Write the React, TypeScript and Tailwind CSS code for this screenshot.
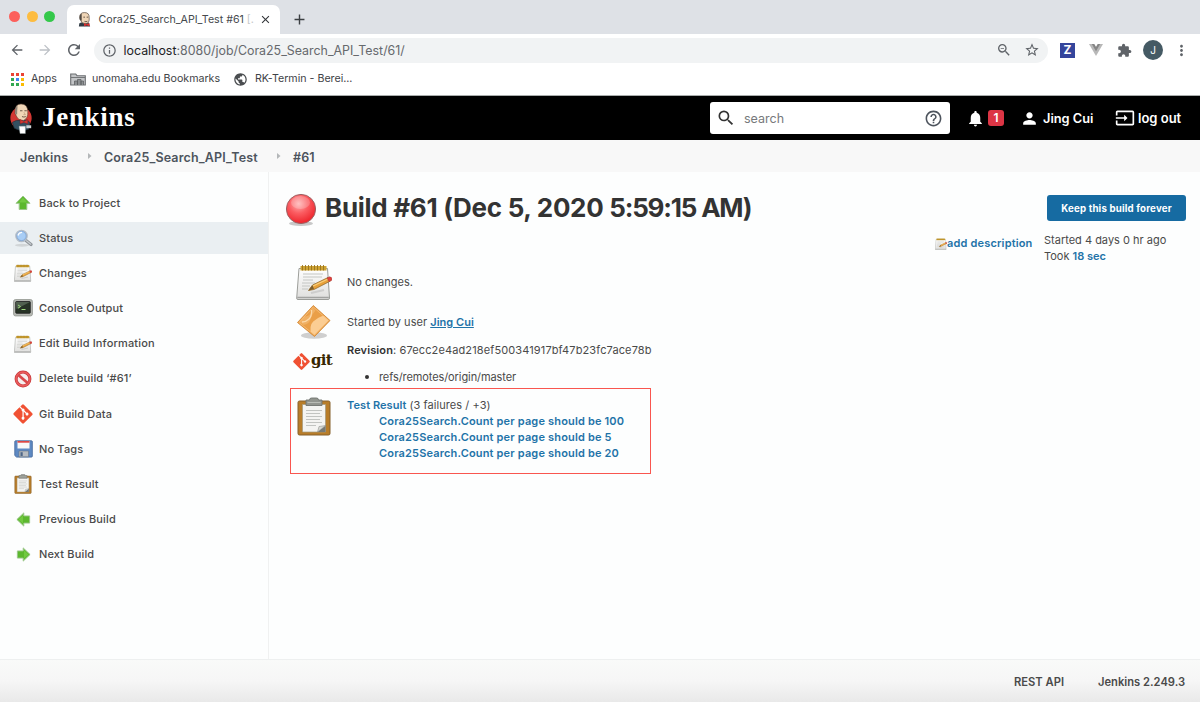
import React from "react";
import {
  MdAdd,
  MdArrowBack,
  MdArrowForward,
  MdClose,
  MdExtension,
  MdHelpOutline,
  MdInfoOutline,
  MdInput,
  MdMoreVert,
  MdNotifications,
  MdPerson,
  MdPublic,
  MdRefresh,
  MdSearch,
  MdStarBorder,
  MdZoomOut,
} from "react-icons/md";
import { FaGitAlt } from "react-icons/fa";

type IconProps = { className?: string };

function Butler({ className }: IconProps) {
  return (
    <svg viewBox="0 0 24 32" className={className}>
      <ellipse cx="12" cy="15.500" rx="11" ry="11.500" fill="#d33833" />
      <path d="M3 20 Q7 17 12 18 Q18 16 21 20 L20 27 Q12 30 5 26 Z" fill="#335061" stroke="#1c2a33" strokeWidth=".6" />
      <path d="M6 8 Q6 1 12 1 Q19 1 19 9 Q19.500 16 14.500 18 Q9 18 7 13 Q5 11 6 8Z" fill="#f0d6b7" stroke="#5a4436" strokeWidth=".6" />
      <path d="M6 11 Q5 5 8.500 3 Q8 8 8 12Z" fill="#8d8377" />
      <path d="M11 8h2.500M15.500 8h2.500M13 14q2 1 4 0" stroke="#49372b" strokeWidth=".8" fill="none" />
      <path d="M15 9.500l1.500 2.500h-2" stroke="#b08968" strokeWidth=".6" fill="none" />
      <path d="M11 17l4 2 4-2v4.500l-4-1.500-4 1.500z" fill="#d33833" stroke="#81171a" strokeWidth=".4" />
      <path d="M10 24h6.500v7.500h-5.500z" fill="#fff" stroke="#9aa" strokeWidth=".4" />
      <path d="M17.500 23h5v3h-5z" fill="#ccd3d6" />
    </svg>
  );
}

function ButlerHead({ className }: IconProps) {
  return (
    <svg viewBox="0 0 16 16" className={className}>
      <path d="M2 15.500l.5-3.500 4-1.500 6 1 1.500 4z" fill="#303b45" />
      <path d="M3 6 Q2.500 .6 8 .6 Q13.200 .6 13 6 Q13.500 12 9.500 12.500 Q5 12.500 3.800 9Z" fill="#efd5b6" stroke="#4c4038" strokeWidth=".7" />
      <path d="M2.800 8 Q2 3 5 1.800 L5 9.500Z" fill="#4f4842" />
      <path d="M6.800 5.500h1.700M10.300 5.500h1.700M8 10q1.500.7 3 0" stroke="#3b2e26" strokeWidth=".8" fill="none" />
      <path d="M7.500 11.800l2.800 1.200 3-1.200v3.400l-3-1-2.800 1z" fill="#d8302f" />
    </svg>
  );
}

function Notepad({ className }: IconProps) {
  return (
    <svg viewBox="0 0 36 36" className={className}>
      <defs>
        <linearGradient id="npPaper" x1="0" y1="0" x2="0" y2="1">
          <stop offset="0" stopColor="#ffffff" />
          <stop offset="1" stopColor="#dededc" />
        </linearGradient>
      </defs>
      <path d="M3 4.500h28.500l2 29.500q0 1.500-1.500 1.500H2q-1.500 0-1.300-1.500z" fill="url(#npPaper)" stroke="#9b9d99" strokeWidth="1" />
      <path d="M1.300 33.500h31.500" stroke="#a2a3a1" strokeWidth="1.500" />
      <path d="M4.500 2h26v4.500h-26z" fill="#cfa433" />
      <path d="M6.500 1v5.500M9.500 1v5.500M12.500 1v5.500M15.500 1v5.500M18.500 1v5.500M21.500 1v5.500M24.500 1v5.500M27.500 1v5.500" stroke="#97731f" strokeWidth=".9" />
      <path d="M7 10h20M7 13h19M7 16h10M6 19h13M6 22h8M6 25h6" stroke="#c4c6c3" strokeWidth="1" />
      <path d="M15 29l13-3" stroke="#aaa" strokeWidth="2" opacity=".4" />
      <path d="M12.500 26.500l4-5.500L32 13.500l2.500 3.500L18 25.500z" fill="#e7a039" stroke="#866127" strokeWidth=".7" />
      <path d="M16 22.500l16-7.500" stroke="#f9d07d" strokeWidth="1.200" />
      <path d="M12.500 26.500l4-5.500 1.500 4z" fill="#7c5f30" />
      <path d="M31 14l2.500-1.200q3 0 2.300 3.500L33 17.600z" fill="#e0403c" stroke="#a83a36" strokeWidth=".5" />
    </svg>
  );
}

function Clipboard({ className }: IconProps) {
  return (
    <svg viewBox="0 0 34 39" className={className}>
      <rect x="1" y="4" width="32" height="34" rx="1.500" fill="#b87d29" stroke="#86602c" strokeWidth="1" />
      <path d="M5.500 7.500h23V35h-23z" fill="#f4f4f2" stroke="#a29880" strokeWidth=".7" />
      <path d="M9 13.500h16M9 16.500h14M9 19.500h16M9 22.500h14M9 25.500h16M9 28.500h10" stroke="#c2c4c1" strokeWidth="1" />
      <path d="M28.500 28.500V35h-8z" fill="#777974" />
      <path d="M20.500 35l1.500-5.500 6.500-1z" fill="#d5d7d3" stroke="#858783" strokeWidth=".5" />
      <path d="M12.500 3q0-2 2-2h5q2 0 2 2H25v5.500H9V3z" fill="#92958f" stroke="#71746f" strokeWidth=".9" />
      <path d="M10.500 5.500h13" stroke="#b9bcb6" strokeWidth="1" />
    </svg>
  );
}

function Diamond({ className }: IconProps) {
  return (
    <svg viewBox="0 0 36 36" className={className}>
      <ellipse cx="18" cy="31.500" rx="13" ry="3.300" fill="#777" opacity=".35" />
      <path d="M17.300 1.500L34 16.500 18.500 32.500 1.500 18.500z" fill="#ea9f48" stroke="#d38a3a" strokeWidth=".9" />
      <path d="M16.500 3.500l-1 5q-2 4-7.500 4L3.500 18l4 3q6-1 7-6 1-4 5-8.500z" fill="#f0b064" />
      <path d="M20 15.500q5-4 8-3.500l4.500 4.500L18.500 31l-4-3.500q-1-9 5.500-12z" fill="#fbcd93" />
      <path d="M15.500 6q.5 6-2.500 9t-7 3" stroke="#fbd8a8" strokeWidth="1.300" fill="none" />
      <path d="M17.300 3L32.500 16.500 18.500 31 3 18.500z" fill="none" stroke="#f9c07b" strokeWidth=".8" />
    </svg>
  );
}

function RedBall({ className }: IconProps) {
  return (
    <svg viewBox="0 0 32 34" className={className}>
      <defs>
        <radialGradient id="ball" cx=".42" cy=".32" r=".65">
          <stop offset="0" stopColor="#ffb3b3" />
          <stop offset=".5" stopColor="#fb5d62" />
          <stop offset="1" stopColor="#ef2930" />
        </radialGradient>
      </defs>
      <ellipse cx="16" cy="30.500" rx="12" ry="2.500" fill="#777" opacity=".4" />
      <circle cx="16" cy="16" r="14.600" fill="url(#ball)" stroke="#9c6264" strokeWidth="1" />
      <ellipse cx="15.500" cy="9.500" rx="9.500" ry="6.500" fill="#fff" opacity=".2" />
    </svg>
  );
}

function GreenArrow({ className }: IconProps) {
  return (
    <svg viewBox="0 0 18 18" className={className}>
      <path d="M9 2L16 9.300H12.800V15.500H5.200V9.300H2z" fill="#5cb82e" stroke="#9cc78b" strokeWidth="1" strokeLinejoin="round" />
      <path d="M9 3.700L13.500 8.500H4.500z" fill="#7cd04a" opacity=".7" />
    </svg>
  );
}

function Lens({ className }: IconProps) {
  return (
    <svg viewBox="0 0 19 19" className={className}>
      <ellipse cx="8" cy="16.300" rx="7" ry="1.500" fill="#999" opacity=".3" />
      <path d="M12 11.500l5 4" stroke="#8f9499" strokeWidth="3.200" strokeLinecap="round" />
      <path d="M12.500 11.800l4.300 3.400" stroke="#c9ced2" strokeWidth="1.200" strokeLinecap="round" />
      <circle cx="7.500" cy="7" r="5.500" fill="#a8cdf5" stroke="#b3bdc8" strokeWidth="1.700" />
      <path d="M3.800 6.500q.7-3.300 4.300-3.200" stroke="#fff" strokeWidth="1.600" fill="none" />
      <circle cx="7.500" cy="7" r="4.600" fill="none" stroke="#6d9bd5" strokeWidth=".6" />
    </svg>
  );
}

function Terminal({ className }: IconProps) {
  return (
    <svg viewBox="0 0 20 18" className={className}>
      <rect x=".6" y=".6" width="18.800" height="16.300" rx="1.800" fill="#b7bab4" stroke="#959993" strokeWidth=".9" />
      <rect x="2.700" y="2.500" width="14.600" height="11.800" rx=".8" fill="#273326" stroke="#222" strokeWidth=".8" />
      <path d="M3 3h14L3.500 10z" fill="#647562" opacity=".7" />
      <path d="M5 6l2.500 1.600L5 9.200M8.500 10.500h4" stroke="#9fdc7c" strokeWidth="1" fill="none" />
    </svg>
  );
}

function NoEntry({ className }: IconProps) {
  return (
    <svg viewBox="0 0 18 18" className={className}>
      <circle cx="9" cy="9" r="6.900" fill="#f6eeee" stroke="#c4393b" strokeWidth="3" />
      <circle cx="9" cy="9" r="6.900" fill="none" stroke="#ea5b5c" strokeWidth="1.700" />
      <path d="M4.300 5l9.400 8" stroke="#d9484a" strokeWidth="2.800" />
    </svg>
  );
}

function Floppy({ className }: IconProps) {
  return (
    <svg viewBox="0 0 19 18" className={className}>
      <path d="M1.500.8h16q.8 0 .8.800v14.600q0 .9-.9.900H2.600L.8 15.500V1.600q0-.8.700-.8z" fill="#5d89c3" stroke="#4b6ea0" strokeWidth=".9" />
      <path d="M3.500 1h12v7.500h-12z" fill="#f8f8f8" />
      <path d="M3.500 1h12v1.700h-12z" fill="#dc4744" />
      <path d="M5 11h9.500v5.800H5z" fill="#b6bbc0" stroke="#697683" strokeWidth=".6" />
      <path d="M6.500 12.200h2.200v3.800H6.500z" fill="#4d6687" />
    </svg>
  );
}

function Folder({ className }: IconProps) {
  return (
    <svg viewBox="0 0 16 13" className={className}>
      <path d="M.7 1h5l1.300 1.700h8.300V12H.7z" fill="#c3c5c7" stroke="#6b6e71" strokeWidth="1.100" />
      <path d="M1 4.500h14" stroke="#6b6e71" strokeWidth=".9" />
      <path d="M4.500 12V8h3v4M7.500 12V6.500h3.500V12M11 12V8h2.500v4" fill="#8c8f91" stroke="#5f6265" strokeWidth=".8" />
    </svg>
  );
}

const appDots = [
  "#ea4335", "#ea4335", "#ea4335",
  "#34a853", "#4285f4", "#fbbc04",
  "#34a853", "#34a853", "#fbbc04",
];

function BrowserChrome() {
  return (
    <header className="shrink-0">
      <div className="flex h-[34px] bg-[#dee1e6]">
        <div className="flex w-[67px] gap-[6.500px] pt-[11px] pl-[9px]">
          <span className="size-[11px] rounded-full bg-[#fc605c]" />
          <span className="size-[11px] rounded-full bg-[#fdbc40]" />
          <span className="size-[11px] rounded-full bg-[#34c84a]" />
        </div>
        <div className="mt-[5px] flex w-[213px] items-center rounded-t-[7px] bg-white pl-[10px]">
          <ButlerHead className="size-[15px]" />
          <span className="ml-[6.500px] w-[157.500px] text-[10.650px] whitespace-nowrap text-[#45494d]">
            Cora25_Search_API_Test #61 <span className="text-[#c5c7c9]">[.</span>
          </span>
          <MdClose className="ml-[3px] size-[13px] shrink-0 text-[#33363a]" />
        </div>
        <MdAdd className="mt-[11px] ml-[11px] size-[17px] text-[#3c4043]" />
      </div>
      <div className="flex h-[32px] items-center bg-white text-[#5f6368]">
        <MdArrowBack className="ml-[9px] size-[16px]" />
        <MdArrowForward className="ml-[12px] size-[16px] text-[#bdc1c6]" />
        <MdRefresh className="ml-[12px] size-[18px]" />
        <div className="ml-[11px] flex h-[25px] w-[954px] items-center rounded-full bg-[#f1f3f4] pl-[8px]">
          <MdInfoOutline className="size-[15px]" />
          <span className="ml-[6.500px] pt-[2px] text-[12.400px] whitespace-nowrap text-[#66696d]">
            <span className="text-[#202124]">localhost</span>:8080/job/Cora25_Search_API_Test/61/
          </span>
          <MdZoomOut className="ml-auto size-[16px]" />
          <MdStarBorder className="mr-[8px] ml-[12px] size-[16px]" />
        </div>
        <span className="ml-[12px] flex size-[15px] items-center justify-center bg-[#35459c] text-[12px] font-bold text-white">Z</span>
        <svg viewBox="0 0 14 12" className="ml-[14px] h-[12px] w-[14px]">
          <path d="M0 0h14L7 12z" fill="#b8b8b8" />
          <path d="M2.800 0h2.600L7 2.800 8.600 0h2.600L7 7.200z" fill="#858585" />
          <path d="M5.400 0h3.200L7 2.800z" fill="#fff" />
        </svg>
        <MdExtension className="ml-[14px] size-[15px]" />
        <span className="ml-[11px] flex size-[20px] items-center justify-center rounded-full bg-[#455a64] text-[10px] text-white">J</span>
        <MdMoreVert className="ml-[10px] size-[17px]" />
      </div>
      <div className="flex h-[30px] items-center border-b border-[#a9adac] bg-white pb-[3px] text-[10.650px] text-[#3f4347]">
        <span className="ml-[11px] grid grid-cols-3 gap-[2px]">
          {appDots.map((color, i) => (
            <span key={i} className="size-[3px]" style={{ backgroundColor: color }} />
          ))}
        </span>
        <span className="ml-[7px] w-[27px]">Apps</span>
        <Folder className="ml-[12px] h-[13px] w-[16px]" />
        <span className="ml-[6px] w-[128px] whitespace-nowrap">unomaha.edu Bookmarks</span>
        <MdPublic className="ml-[13px] size-[15px] text-[#4a4d50]" />
        <span className="ml-[7px] whitespace-nowrap">RK-Termin - Berei...</span>
      </div>
    </header>
  );
}

function JenkinsHeader() {
  return (
    <div className="flex h-[44px] shrink-0 items-center bg-black font-semibold text-white">
      <Butler className="ml-[9px] h-[31px] w-[24px]" />
      <span className="mb-[2px] ml-[9px] font-['Liberation_Serif',serif] text-[27px] leading-none font-bold tracking-[0.026em]">Jenkins</span>
      <div className="ml-auto flex h-[32px] w-[240px] items-center rounded-[3px] bg-white text-[#4d545d]">
        <MdSearch className="ml-[6px] size-[20px] text-[#333]" />
        <span className="ml-[8px] pt-[2px] text-[12.500px] font-normal text-[#77797c]">search</span>
        <MdHelpOutline className="mr-[7px] ml-auto size-[19px]" />
      </div>
      <MdNotifications className="ml-[16px] size-[19px]" />
      <span className="ml-[3px] flex h-[16px] w-[16px] items-center justify-center rounded-[3px] bg-[#dc3545] text-[12px]">1</span>
      <MdPerson className="ml-[16px] size-[19px]" />
      <span className="ml-[4px] w-[51px] pt-[2px] text-[12.800px] whitespace-nowrap">Jing Cui</span>
      <MdInput className="ml-[21px] size-[20px]" />
      <span className="ml-[3px] w-[62px] pt-[2px] text-[13px] whitespace-nowrap">log out</span>
    </div>
  );
}

function Caret() {
  return (
    <svg viewBox="0 0 4 6" className="h-[6px] w-[4px]">
      <path d="M0 0l3.500 3L0 6z" fill="#b4b7b9" />
    </svg>
  );
}

function Breadcrumbs() {
  return (
    <nav className="flex h-[32px] shrink-0 items-center bg-[#f8f8f8] pl-[20px] text-[12.500px] font-semibold tracking-[0.012em] text-[#4d545d]">
      <span className="w-[68px] pt-[4px] whitespace-nowrap">Jenkins</span>
      <Caret />
      <span className="ml-[12px] w-[173px] pt-[4px] whitespace-nowrap">Cora25_Search_API_Test</span>
      <Caret />
      <span className="ml-[12px] pt-[4px]">#61</span>
    </nav>
  );
}

const tasks: { label: string; icon: React.ReactNode; active?: boolean }[] = [
  { label: "Back to Project", icon: <GreenArrow className="size-[18px]" /> },
  { label: "Status", icon: <Lens className="size-[19px]" />, active: true },
  { label: "Changes", icon: <Notepad className="size-[18px]" /> },
  { label: "Console Output", icon: <Terminal className="h-[18px] w-[20px]" /> },
  { label: "Edit Build Information", icon: <Notepad className="size-[18px]" /> },
  { label: "Delete build ‘#61’", icon: <NoEntry className="size-[18px]" /> },
  { label: "Git Build Data", icon: <FaGitAlt className="size-[22px] text-[#f05133]" /> },
  { label: "No Tags", icon: <Floppy className="h-[18px] w-[19px]" /> },
  { label: "Test Result", icon: <Clipboard className="h-[20px] w-[18px]" /> },
  { label: "Previous Build", icon: <GreenArrow className="size-[17px] -rotate-90" /> },
  { label: "Next Build", icon: <GreenArrow className="size-[17px] rotate-90" /> },
];

function Sidebar() {
  return (
    <aside className="flex w-[269px] shrink-0 flex-col gap-[3.150px] border-r border-[#f0f1f1] pt-[15px]">
      {tasks.map((task) => (
        <a key={task.label} className={`flex h-[32px] items-center text-[11px] font-medium tracking-[0.014em] text-[#4a4a4a] ${task.active ? "bg-[#eaeff2]" : ""}`}>
          <span className="ml-[12px] flex w-[22px] justify-center">{task.icon}</span>
          <span className="ml-[5px] whitespace-nowrap">{task.label}</span>
        </a>
      ))}
    </aside>
  );
}

function BuildDetails() {
  return (
    <section className="flex w-[630px] flex-col text-[11px] leading-[16px] tracking-[0.003em] whitespace-nowrap">
      <h1 className="flex h-[40px] items-center text-[26px] font-bold tracking-[-0.300px] text-[#333]">
        <RedBall className="mt-[3px] mr-[8px] h-[34px] w-[32px]" />
        <span>
          Build #61 (Dec 5, 2020 <span className="tracking-[-1.200px]">5:59:15 AM)</span>
        </span>
      </h1>
      <div className="mt-[34px] flex h-[40px] items-center">
        <Notepad className="ml-[11px] size-[36px]" />
        <span className="ml-[15px]">No changes.</span>
      </div>
      <div className="flex h-[40px] items-center">
        <Diamond className="ml-[11px] size-[36px]" />
        <span className="ml-[15px]">
          Started by user <a className="font-semibold text-[#1f73a8] underline">Jing Cui</a>
        </span>
      </div>
      <div className="flex h-[46px] items-start">
        <div className="ml-[7px] flex w-[55px] items-center pt-[10px]">
          <FaGitAlt className="size-[19px] text-[#f05133]" />
          <span className="mb-[3px] font-['DejaVu_Serif',serif] text-[15px] font-bold tracking-[-0.050em] text-[#362701]">git</span>
        </div>
        <div>
          <p className="tracking-[0.011em]"><b className="font-semibold text-[#333]">Revision</b>: 67ecc2e4ad218ef500341917bf47b23fc7ace78b</p>
          <p className="mt-[11px] flex items-center tracking-[-0.008em]">
            <span className="ml-[18px] size-[4px] rounded-full bg-[#333]" />
            <span className="ml-[10px]">refs/remotes/origin/master</span>
          </p>
        </div>
      </div>
      <div className="ml-[5px] flex h-[86px] w-[361px] border border-[#f9564f] pt-[8px] pl-[6px]">
        <Clipboard className="h-[39px] w-[34px]" />
        <div className="ml-[16px] font-semibold tracking-[0.006em] text-[#1f73a8]">
          <p>Test Result <span className="font-normal text-[#4a4a4a]">(3 failures / +3)</span></p>
          <ul className="pl-[32px] tracking-[0.015em]">
            <li>Cora25Search.Count per page should be 100</li>
            <li>Cora25Search.Count per page should be 5</li>
            <li>Cora25Search.Count per page should be 20</li>
          </ul>
        </div>
      </div>
    </section>
  );
}

function BuildActions() {
  return (
    <section className="flex flex-1 flex-col items-end pr-[14px] text-[11px] leading-[16px] whitespace-nowrap">
      <button className="mt-[7px] h-[26px] w-[139px] rounded-[3px] bg-[#166ba2] pt-[2px] text-[9.700px] font-bold tracking-[0.018em] text-white">
        Keep this build forever
      </button>
      <div className="mt-[12px] flex items-start">
        <Notepad className="mt-[5px] size-[12px]" />
        <a className="mt-[2px] w-[97px] font-semibold tracking-[0.015em] text-[#1f73a8]">add description</a>
        <div className="-mt-px w-[142px]">
          <p>Started 4 days 0 hr ago</p>
          <p>Took <a className="font-semibold text-[#1f73a8]">18 sec</a></p>
        </div>
      </div>
    </section>
  );
}

export default function App() {
  return (
    <div className="flex h-[702px] w-[1200px] flex-col overflow-hidden bg-[#fdfefe] font-['Inter',sans-serif] text-[#4a4a4a]">
      <BrowserChrome />
      <JenkinsHeader />
      <Breadcrumbs />
      <main className="flex flex-1">
        <Sidebar />
        <div className="flex flex-1 items-start pt-[16px] pl-[16px]">
          <BuildDetails />
          <BuildActions />
        </div>
      </main>
      <footer className="flex h-[43px] shrink-0 items-center border-t border-[#eef0f0] bg-linear-to-b from-[#f9faf9] via-[#f6f6f6] to-[#e9e9e9] pt-[3px] text-[11.200px] font-semibold text-[#4a4a4a]">
        <span className="ml-auto w-[84px] whitespace-nowrap">REST API</span>
        <span className="w-[102px] whitespace-nowrap">Jenkins 2.249.3</span>
      </footer>
    </div>
  );
}
